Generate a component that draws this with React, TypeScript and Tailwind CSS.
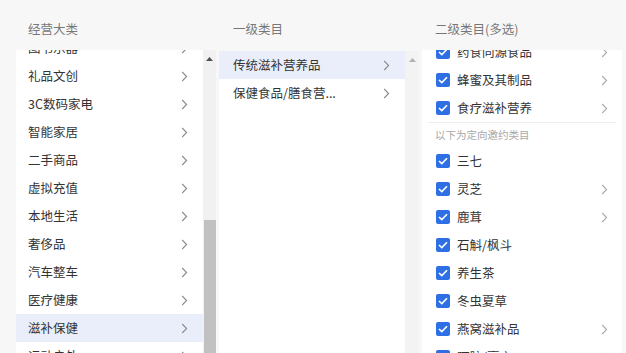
import React from 'react';

const font = { fontFamily: '"Noto Sans CJK SC", "Noto Sans", sans-serif' };

const Chevron = ({ light }: { light?: boolean }) => (
  <svg width="7" height="11" viewBox="0 0 7 11" className="shrink-0">
    <polyline points="1.2,1 5.6,5.5 1.2,10" fill="none" stroke={light ? '#aaa' : '#8a8a8a'} strokeWidth="1.1" />
  </svg>
);

const Check = () => (
  <div className="w-[14px] h-[14px] rounded-[2px] bg-[#2f6fe4] flex items-center justify-center shrink-0">
    <svg width="10" height="8" viewBox="0 0 10 8">
      <polyline points="1,4 3.8,6.6 9,1.2" fill="none" stroke="#fff" strokeWidth="1.6" />
    </svg>
  </div>
);

const UpArrow = ({ color }: { color: string }) => (
  <div className="h-[18px] flex items-center justify-center">
    <svg width="7" height="4" viewBox="0 0 7 4">
      <polygon points="0,4 3.5,0 7,4" fill={color} />
    </svg>
  </div>
);

const mainCats = [
  '图书乐器', '礼品文创', '3C数码家电', '智能家居', '二手商品', '虚拟充值',
  '本地生活', '奢侈品', '汽车整车', '医疗健康', '滋补保健', '运动户外',
];

const firstCats = ['传统滋补营养品', '保健食品/膳食营...'];

const topSub = [
  { name: '药食同源食品', more: true },
  { name: '蜂蜜及其制品', more: true },
  { name: '食疗滋补营养', more: true },
];

const invitedSub = [
  { name: '三七', more: false },
  { name: '灵芝', more: true },
  { name: '鹿茸', more: true },
  { name: '石斛/枫斗', more: false },
  { name: '养生茶', more: false },
  { name: '冬虫夏草', more: false },
  { name: '燕窝滋补品', more: true },
  { name: '阿胶/膏方', more: true },
];

export default function App() {
  return (
    <div className="w-[626px] h-[353px] bg-[#f7f7f8] flex overflow-hidden text-[12.5px] text-[#333]" style={font}>
      {/* 经营大类 */}
      <div className="w-[216px] pl-4 flex flex-col">
        <div className="h-[50px] shrink-0 flex items-center pt-[8px] pl-[12px] text-[#777]">经营大类</div>
        <div className="flex-1 flex overflow-hidden">
          <div className="w-[187px] bg-white overflow-hidden">
            <div className="-mt-[16px]">
              {mainCats.map((c) => (
                <div
                  key={c}
                  className={`h-[28px] flex items-center justify-between pl-[12px] pr-[15px] ${c === '滋补保健' ? 'bg-[#e9eefa]' : ''}`}
                >
                  <span>{c}</span>
                  <Chevron />
                </div>
              ))}
            </div>
          </div>
          <div className="w-[13px] bg-[#f1f1f1] flex flex-col">
            <UpArrow color="#505050" />
            <div className="h-[152px]" />
            <div className="flex-1 bg-[#c1c1c1] ml-px" />
          </div>
        </div>
      </div>

      {/* 一级类目 */}
      <div className="w-[206px] pl-[3px] flex flex-col">
        <div className="h-[50px] shrink-0 flex items-center pt-[8px] pl-[14px] text-[#777]">一级类目</div>
        <div className="flex-1 flex overflow-hidden pt-px">
          <div className="w-[186px] bg-white">
            {firstCats.map((c, i) => (
              <div
                key={c}
                className={`h-[28px] flex items-center justify-between pl-[14px] pr-[15px] ${i === 0 ? 'bg-[#e9eefa]' : ''}`}
              >
                <span>{c}</span>
                <Chevron />
              </div>
            ))}
          </div>
          <div className="w-[14px] bg-[#f3f3f3]">
            <UpArrow color="#b0b0b0" />
          </div>
        </div>
      </div>

      {/* 二级类目 */}
      <div className="w-[200px] flex flex-col">
        <div className="h-[50px] shrink-0 flex items-center pt-[8px] pl-[13px] text-[#777]">二级类目(多选)</div>
        <div className="flex-1 bg-white overflow-hidden">
          <div className="-mt-[12px]">
            {topSub.map((s) => (
              <div key={s.name} className="h-[28px] flex items-center pl-[14px] pr-[14px]">
                <Check />
                <span className="ml-[7px] flex-1">{s.name}</span>
                {s.more && <Chevron light />}
              </div>
            ))}
            <div className="mx-[6px] border-t border-[#ececec] h-[25px] flex items-center pl-[7px] text-[10.5px] text-[#a8a8a8]">
              以下为定向邀约类目
            </div>
            {invitedSub.map((s) => (
              <div key={s.name} className="h-[28px] flex items-center pl-[14px] pr-[14px]">
                <Check />
                <span className="ml-[7px] flex-1">{s.name}</span>
                {s.more && <Chevron light />}
              </div>
            ))}
          </div>
        </div>
      </div>
    </div>
  );
}
